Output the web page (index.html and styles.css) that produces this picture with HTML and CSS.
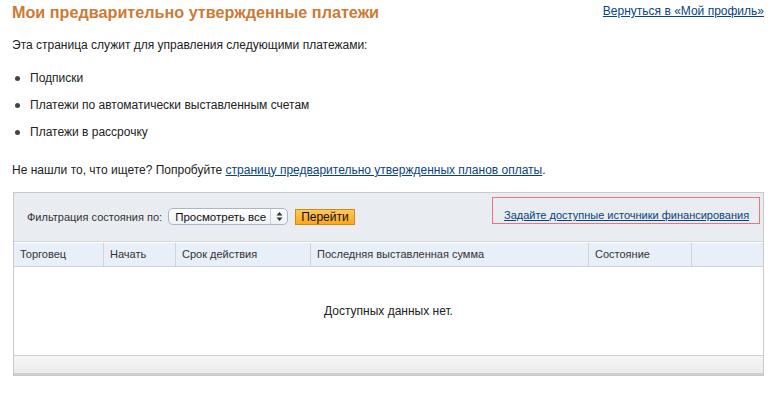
FILE: index.html
```html
<!DOCTYPE html>
<html lang="ru">
<head>
  <meta charset="UTF-8">
  <title>Мои предварительно утвержденные платежи</title>
  <link rel="stylesheet" href="styles.css">
</head>
<body>
  <div class="page">
    <div class="top">
      <h1>Мои предварительно утвержденные платежи</h1>
      <a href="#" class="back">Вернуться в «Мой профиль»</a>
    </div>

    <p class="intro">Эта страница служит для управления следующими платежами:</p>

    <ul class="kinds">
      <li>Подписки</li>
      <li>Платежи по автоматически выставленным счетам</li>
      <li>Платежи в рассрочку</li>
    </ul>

    <p class="hint">Не нашли то, что ищете? Попробуйте <a href="#">страницу предварительно утвержденных планов оплаты</a>.</p>

    <div class="box">
      <div class="filter">
        <div class="filter-left">
          <span>Фильтрация состояния по:</span>
          <div class="select">
            <span>Просмотреть все</span>
            <span class="arrows">
              <svg width="7" height="11" viewBox="0 0 7 11"><path d="M3.5 1 L6.5 4.5 H0.5 Z M3.5 10 L0.5 6.5 H6.5 Z" fill="#333"/></svg>
            </span>
          </div>
          <button class="go">Перейти</button>
        </div>
        <div class="sources"><a href="#">Задайте доступные источники финансирования</a></div>
      </div>

      <div class="thead">
        <div class="th c1">Торговец</div>
        <div class="th c2">Начать</div>
        <div class="th c3">Срок действия</div>
        <div class="th c4">Последняя выставленная сумма</div>
        <div class="th c5">Состояние</div>
        <div class="th c6"></div>
      </div>

      <div class="empty">Доступных данных нет.</div>
      <div class="foot"></div>
    </div>
  </div>
</body>
</html>
```

FILE: styles.css
```css
* {
  box-sizing: border-box;
}

body {
  margin: 0;
  font-family: 'Liberation Sans', Arial, sans-serif;
  font-size: 12px;
  color: #222;
  background: #fff;
}

a {
  color: #084482;
}

.page {
  padding: 0 15px 0 12px;
}

.top {
  display: flex;
  justify-content: space-between;
  align-items: flex-start;
}

h1 {
  margin: 1px 0 0;
  font-size: 16.2px;
  line-height: 22px;
  color: #cd7a35;
}

.back {
  margin-top: 3px;
  line-height: 16px;
}

.intro {
  margin: 14px 0 0;
  line-height: 16px;
}

.kinds {
  margin: 17px 0 0;
  padding: 0 0 0 18px;
  list-style: none;
}

.kinds li {
  position: relative;
  line-height: 16px;
  margin-bottom: 11px;
}

.kinds li::before {
  content: '';
  position: absolute;
  left: -15px;
  top: 6px;
  width: 5px;
  height: 5px;
  border-radius: 50%;
  background: #444;
}

.hint {
  margin: 22px 0 0;
  line-height: 16px;
}

.box {
  margin: 14px 0 0 1px;
  width: 751px;
  border: 1px solid #c9c9c9;
}

.filter {
  background: #e9ecf0;
  height: 49px;
  display: flex;
  justify-content: space-between;
  align-items: flex-start;
  border-bottom: 1px solid #d4d6d9;
}

.filter-left {
  display: flex;
  align-items: center;
  gap: 6px;
  margin: 15px 0 0 13px;
  font-size: 11px;
  color: #333;
}

.select {
  display: flex;
  align-items: center;
  justify-content: space-between;
  height: 17px;
  width: 120px;
  border: 1px solid #a9b6c6;
  border-radius: 5px;
  background: linear-gradient(#ffffff, #eef1f5);
  font-size: 11.5px;
  color: #111;
  padding-left: 6px;
  white-space: nowrap;
}

.arrows {
  width: 17px;
  height: 15px;
  border-left: 1px solid #c8cfd8;
  display: flex;
  align-items: center;
  justify-content: center;
}

.go {
  margin-left: 1px;
  height: 16px;
  padding: 0 5px;
  border: 1px solid #d18b12;
  background: linear-gradient(#ffc857, #fca61d);
  font-family: inherit;
  font-size: 12px;
  color: #111;
  line-height: 14px;
}

.sources {
  margin: 4px 3px 0 0;
  border: 1px solid #e8767a;
  height: 27px;
  width: 268px;
  padding: 10px 0 0 11px;
  font-size: 11px;
  line-height: 14px;
  white-space: nowrap;
}

.thead {
  display: flex;
  background: #e8eff8;
  height: 25px;
  border-top: 1px solid #fff;
  border-bottom: 1px solid #cfd3d8;
}

.th {
  padding: 0 6px;
  line-height: 23px;
  font-size: 11px;
  color: #333;
  border-right: 1px solid #cfd3d8;
}

.c1 { width: 90px; }
.c2 { width: 72px; }
.c3 { width: 135px; }
.c4 { width: 278px; }
.c5 { width: 103px; }
.c6 { flex: 1; border-right: none; }

.empty {
  height: 88px;
  display: flex;
  align-items: center;
  justify-content: center;
  font-size: 12px;
  color: #222;
}

.foot {
  height: 20px;
  border-top: 1px solid #d0d0d0;
  border-bottom: 2px solid #cfcfcf;
  background: linear-gradient(#f6f6f6, #ebebeb);
}
```
